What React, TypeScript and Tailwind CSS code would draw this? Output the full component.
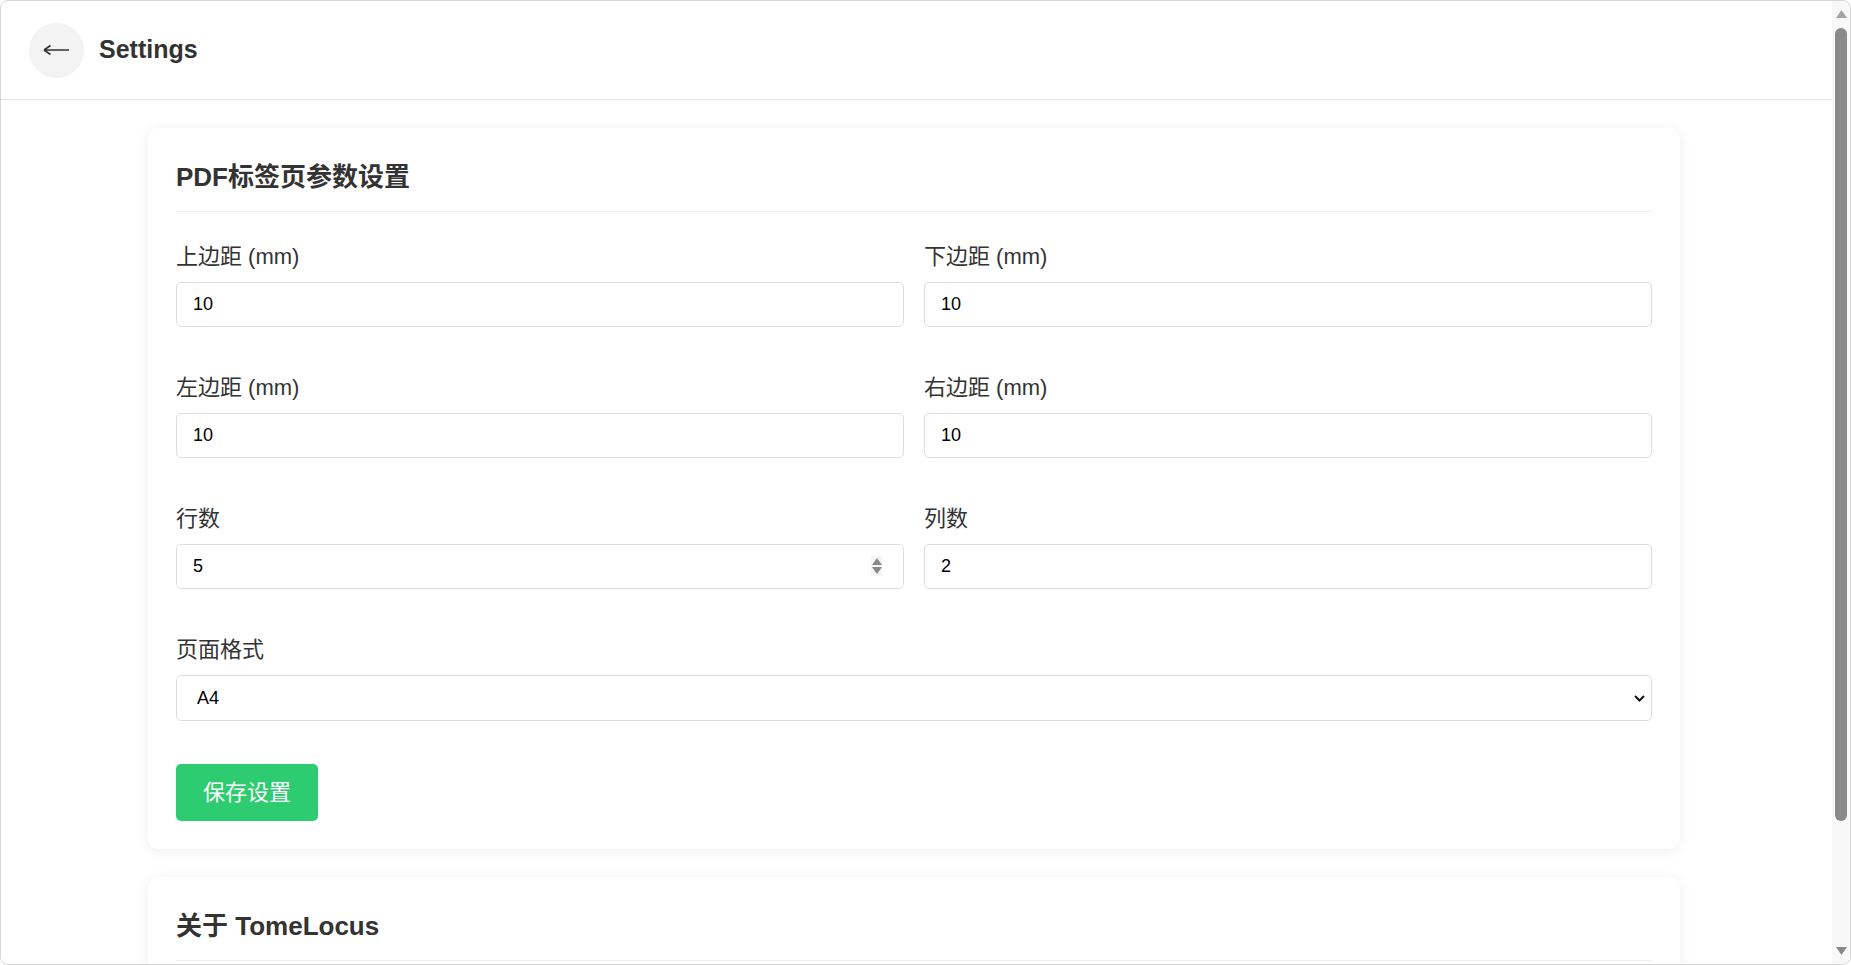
import React, { useState } from 'react';

const FONT = '"Liberation Sans", "Noto Sans CJK SC", Arial, sans-serif';

interface FieldProps {
  label: string;
  value: string;
  spinner?: boolean;
}

const Field: React.FC<FieldProps> = ({ label, value, spinner }) => (
  <div className="flex flex-col">
    <label className="text-[22px] leading-[28px] text-[#333] mb-[11px]">{label}</label>
    <div className="relative">
      <input
        type="text"
        defaultValue={value}
        className="w-full h-[45px] border border-[#ddd] rounded-[5px] px-4 text-[18px] text-black bg-white outline-none"
      />
      {spinner && (
        <div className="absolute right-[22px] top-[12px] w-[11px] h-[20px] bg-[#f4f4f4] flex flex-col items-center justify-center gap-[2px]">
          <svg width="10" height="7" viewBox="0 0 10 7"><path d="M5 0 L10 7 H0 Z" fill="#888" /></svg>
          <svg width="10" height="7" viewBox="0 0 10 7"><path d="M0 0 H10 L5 7 Z" fill="#888" /></svg>
        </div>
      )}
    </div>
  </div>
);

const Card: React.FC<{ title: string; children: React.ReactNode }> = ({ title, children }) => (
  <section className="bg-white rounded-[10px] shadow-[0_2px_14px_rgba(0,0,0,0.07)] px-7 pt-7 pb-7">
    <h2 className="text-[26px] leading-[42px] font-bold text-[#333] pb-[13px] border-b border-[#eee]">{title}</h2>
    {children}
  </section>
);

const ScrollBar: React.FC = () => (
  <div className="w-[18px] h-full bg-[#f8f8f8] flex flex-col items-center pt-[9px] pb-[9px]">
    <svg width="11" height="8" viewBox="0 0 11 8"><path d="M5.5 0 L11 8 H0 Z" fill="#a3a3a3" /></svg>
    <div className="mt-[10px] w-[12px] h-[793px] rounded-full bg-[#8a8a8a]" />
    <div className="flex-1" />
    <svg width="11" height="8" viewBox="0 0 11 8"><path d="M0 0 H11 L5.5 8 Z" fill="#8a8a8a" /></svg>
  </div>
);

const App: React.FC = () => {
  const [format, setFormat] = useState('A4');

  return (
    <div className="h-screen bg-white border border-[#d6d6d6] rounded-[8px] overflow-hidden flex" style={{ fontFamily: FONT }}>
      <div className="flex-1 h-full overflow-y-auto">
        <header className="h-[99px] flex items-center px-7 border-b border-[#e6e6e6]">
          <button className="w-[55px] h-[55px] rounded-full bg-[#f3f3f3] flex items-center justify-center">
            <svg width="27" height="12" viewBox="0 0 27 12" fill="none" stroke="#333" strokeWidth="1.6">
              <path d="M1 6 H26 M1 6 L7.5 1.5 M1 6 L7.5 10.5" />
            </svg>
          </button>
          <h1 className="ml-[15px] text-[25px] font-bold text-[#333]">Settings</h1>
        </header>

        <main className="pl-[147px] pr-[152px] pt-[28px] pb-[28px] flex flex-col gap-7">
          <Card title="PDF标签页参数设置">
            <div className="grid grid-cols-2 gap-x-5 gap-y-[47px] mt-[31px]">
              <Field label="上边距 (mm)" value="10" />
              <Field label="下边距 (mm)" value="10" />
              <Field label="左边距 (mm)" value="10" />
              <Field label="右边距 (mm)" value="10" />
              <Field label="行数" value="5" spinner />
              <Field label="列数" value="2" />
              <div className="col-span-2 flex flex-col">
                <label className="text-[22px] leading-[28px] text-[#333] mb-[11px]">页面格式</label>
                <div className="relative">
                  <select
                    value={format}
                    onChange={(e) => setFormat(e.target.value)}
                    className="w-full h-[46px] appearance-none border border-[#ddd] rounded-[5px] pl-[20px] pr-8 text-[18px] text-black bg-white outline-none"
                  >
                    <option value="A4">A4</option>
                    <option value="A5">A5</option>
                    <option value="Letter">Letter</option>
                  </select>
                  <svg className="absolute right-[7px] top-[20px] pointer-events-none" width="11" height="7" viewBox="0 0 11 7" fill="none" stroke="#111" strokeWidth="2">
                    <path d="M1 1 L5.5 5.5 L10 1" />
                  </svg>
                </div>
              </div>
            </div>
            <button className="mt-[43px] h-[57px] px-[27px] rounded-[5px] bg-[#2ecc71] text-white text-[22px]">保存设置</button>
          </Card>

          <Card title="关于 TomeLocus">
            <div className="mt-[24px] text-[18px] leading-[30px] text-[#555] flex flex-col gap-2">
              <p>版本：1.0.0</p>
              <p>TomeLocus 是一个帮助您管理图书位置与标签打印的工具。</p>
            </div>
          </Card>
        </main>
      </div>
      <ScrollBar />
    </div>
  );
};

export default App;
